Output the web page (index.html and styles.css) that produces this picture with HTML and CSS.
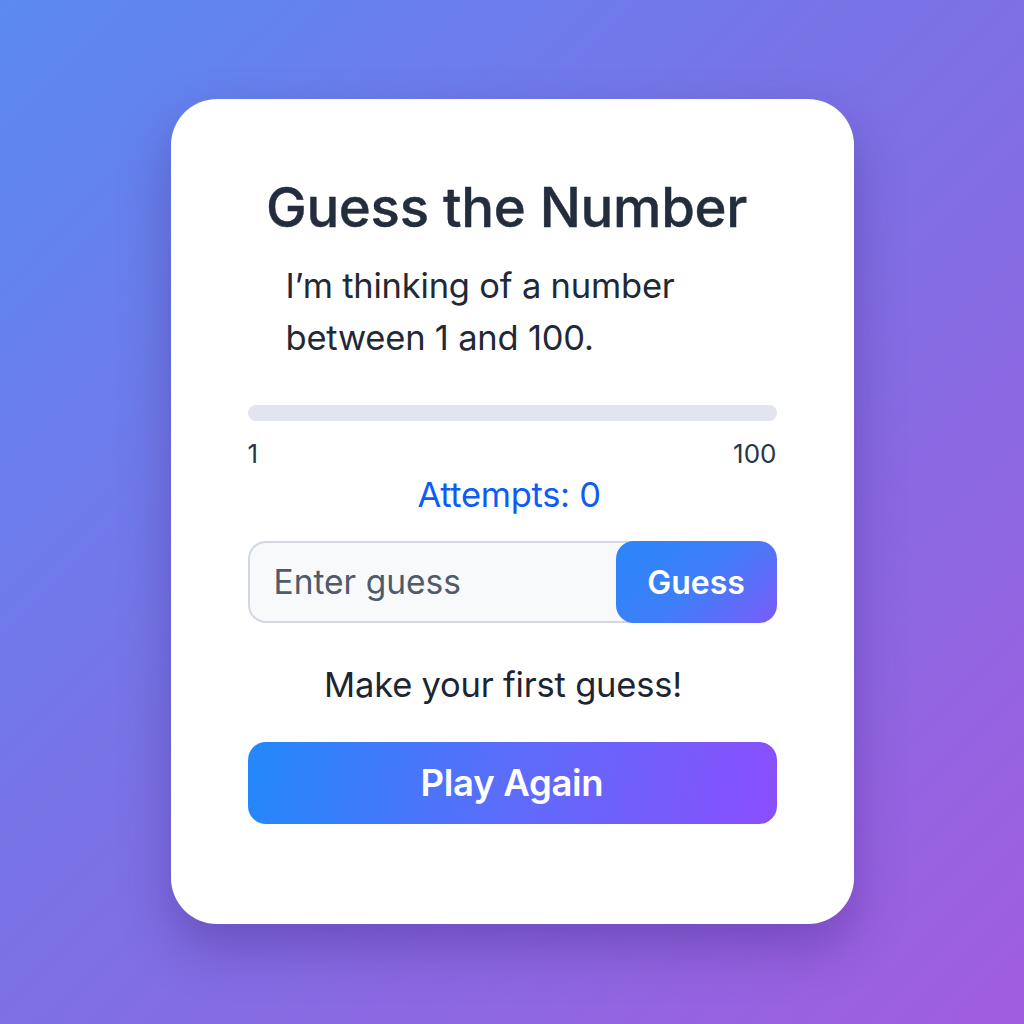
FILE: index.html
```html
<!DOCTYPE html>
<html lang="en">
<head>
<meta charset="utf-8">
<title>Guess the Number</title>
<link rel="stylesheet" href="styles.css">
</head>
<body>
<main class="card">
  <h1 class="title">Guess the Number</h1>
  <p class="intro">I’m thinking of a number between 1 and 100.</p>
  <div class="range">
    <div class="track"></div>
    <div class="range-labels"><span>1</span><span>100</span></div>
  </div>
  <div class="attempts">Attempts: 0</div>
  <form class="guess-form">
    <input class="guess-input" type="text" placeholder="Enter guess">
    <button class="guess-btn" type="button">Guess</button>
  </form>
  <p class="message">Make your first guess!</p>
  <button class="play-btn" type="button">Play Again</button>
</main>
</body>
</html>
```

FILE: styles.css
```css
* { box-sizing: border-box; }

html, body { height: 100%; }

body {
  margin: 0;
  font-family: Inter, "Noto Sans", sans-serif;
  background: linear-gradient(135deg, #5a8af0 0%, #7a72e6 45%, #a15ddf 100%);
  display: flex;
  justify-content: center;
  align-items: flex-start;
}

.card {
  margin-top: 99px;
  width: 683px;
  height: 825px;
  background: #fff;
  border-radius: 46px;
  padding: 77px 77px 0 77px;
  box-shadow: 0 24px 50px rgba(60, 30, 120, 0.35);
  display: flex;
  flex-direction: column;
}

.title {
  margin: 0;
  padding-right: 11px;
  font-size: 54.5px;
  font-weight: 500;
  line-height: 62px;
  color: #232d3d;
  text-align: center;
  letter-spacing: -0.3px;
  white-space: nowrap;
  -webkit-text-stroke: 0.4px #232d3d;
}

.intro {
  margin: 22px 0 0 38px;
  width: 440px;
  font-size: 34.5px;
  line-height: 52px;
  color: #1f2937;
  letter-spacing: -0.2px;
}

.range { margin-top: 41px; }

.track {
  height: 16px;
  border-radius: 8px;
  background: #e2e5ee;
}

.range-labels {
  margin-top: 18px;
  display: flex;
  justify-content: space-between;
  font-size: 26px;
  line-height: 30px;
  color: #2b3544;
}

.attempts {
  margin-top: 6px;
  padding-right: 6px;
  text-align: center;
  font-size: 34.5px;
  line-height: 40px;
  color: #0d5cf5;
  letter-spacing: -0.3px;
}

.guess-form {
  margin-top: 26px;
  display: flex;
  height: 82px;
}

.guess-input {
  flex: 1;
  min-width: 0;
  border: 2px solid #d3d8e0;
  border-right: none;
  border-radius: 18px 0 0 18px;
  background: #f7f9fb;
  padding: 0 24px;
  font-family: inherit;
  font-size: 33.5px;
  color: #1f2937;
  outline: none;
}

.guess-input::placeholder { color: #4f5a6b; }

.guess-btn {
  width: 161px;
  margin-left: -18px;
  position: relative;
  border: none;
  border-radius: 18px;
  background: linear-gradient(135deg, #2a86f8 0%, #3f7ef9 50%, #7a5cf8 100%);
  color: #fff;
  font-family: inherit;
  font-size: 32px;
  font-weight: 600;
  cursor: pointer;
}

.message {
  margin: 42px 0 0;
  padding-right: 18px;
  text-align: center;
  font-size: 34.5px;
  line-height: 40px;
  color: #1c2533;
  letter-spacing: -0.2px;
}

.play-btn {
  margin-top: 37px;
  height: 82px;
  border: none;
  border-radius: 18px;
  background: linear-gradient(100deg, #2288fa 0%, #5d6cfb 50%, #8a4ffb 100%);
  color: #fff;
  font-family: inherit;
  font-size: 36.5px;
  font-weight: 600;
  letter-spacing: -0.3px;
  cursor: pointer;
}
```
